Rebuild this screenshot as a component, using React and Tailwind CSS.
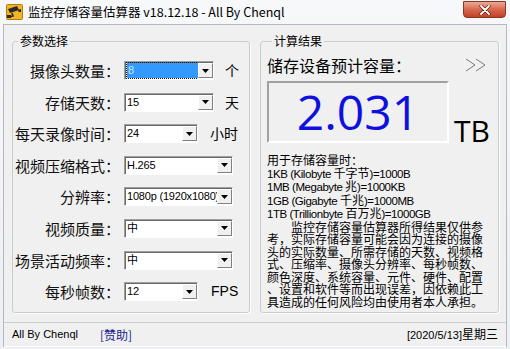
import React from "react";

const rows = [
  { label: "摄像头数量：", value: "8", w: "w-[90px]", unit: "个", selected: true },
  { label: "存储天数：", value: "15", w: "w-[90px]", unit: "天" },
  { label: "每天录像时间：", value: "24", w: "w-[74px]", unit: "小时" },
  { label: "视频压缩格式：", value: "H.265", w: "w-[109px]" },
  { label: "分辨率：", value: "1080p (1920x1080)", w: "w-[109px]" },
  { label: "视频质量：", value: "中", w: "w-[109px]" },
  { label: "场景活动频率：", value: "中", w: "w-[109px]" },
  { label: "每秒帧数：", value: "12", w: "w-[74px]", unit: "FPS" },
];

const notes = [
  "用于存储容量时：",
  "1KB (Kilobyte 千字节)=1000B",
  "1MB (Megabyte 兆)=1000KB",
  "1GB (Gigabyte 千兆)=1000MB",
  "1TB (Trillionbyte 百万兆)=1000GB",
  "　　监控存储容量估算器所得结果仅供参",
  "考，实际存储容量可能会因为连接的摄像",
  "头的实际数量、所需存储的天数、视频格",
  "式、压缩率、摄像头分辨率、每秒帧数、",
  "颜色深度、系统容量、元件、硬件、配置",
  "、设置和软件等而出现误差，因依赖此工",
  "具造成的任何风险均由使用者本人承担。",
];

// split a line into latin / cjk runs so the latin part can use a narrower face
function Mixed({ text }) {
  const parts = text.split(/([\x20-\x7E]+)/).filter(Boolean);
  return parts.map((p, i) =>
    /^[\x20-\x7E]+$/.test(p) ? (
      <span key={i} className="font-['Liberation_Sans',sans-serif] text-[11.5px] tracking-[-0.45px]">
        {p}
      </span>
    ) : (
      <span key={i}>{p}</span>
    )
  );
}

function AppIcon() {
  return (
    <svg width="17" height="16" viewBox="0 0 17 16">
      <rect x="0.5" y="0.5" width="16" height="15" rx="1" fill="#f2b526" stroke="#b67a10" />
      <path d="M2 5 L11 2 L13 6 L4 9 Z" fill="#2a2a2a" />
      <path d="M12 6 L15 5 L15 8 L12.5 8 Z" fill="#2a2a2a" />
      <path d="M6 9 L7 12 L3 13 L3 11" fill="none" stroke="#2a2a2a" strokeWidth="1.6" />
      <rect x="1" y="11" width="4" height="3" fill="#2a2a2a" />
    </svg>
  );
}

function Combo({ value, w, selected }) {
  return (
    <div className={`${w} h-[19px] flex bg-white border border-[#a0a0a0] border-b-white border-r-white shadow-[inset_1px_1px_0_#696969]`}>
      <div className="flex-1 min-w-0 pl-[2px] pt-[1px] overflow-hidden">
        {selected ? (
          <div className="h-[15px] bg-[#3399ff] outline outline-1 outline-dotted outline-[#1a1a1a] text-[#cfe6ff] pl-[1px] leading-[15px]">
            {value}
          </div>
        ) : (
          <div className="whitespace-nowrap leading-[15px] text-black tracking-[-0.2px]">{value}</div>
        )}
      </div>
      <div className="w-[15px] my-[1px] bg-[#f0f0f0] border border-white border-r-[#808080] border-b-[#808080] flex items-center justify-center">
        <svg width="7" height="4" viewBox="0 0 7 4">
          <path d="M0 0 H7 L3.5 4 Z" fill="#000" />
        </svg>
      </div>
    </div>
  );
}

export default function App() {
  return (
    <div className="w-[510px] h-[349px] bg-gradient-to-b from-[#f7f8fa] to-[#eceff3] font-['Noto_Sans_CJK_SC',sans-serif] text-black flex flex-col overflow-hidden">
      <div className="h-[24px] flex items-center pl-[6px] pr-[4px]">
        <AppIcon />
        <span className="ml-[5px] text-[12.5px] leading-none">
          监控存储容量估算器 v18.12.18 - All By Chenql
        </span>
        <div className="ml-auto self-start mt-[1px] w-[43px] h-[17px] rounded-b-[4px] border border-[#8b3522] bg-gradient-to-b from-[#e9a896] via-[#d6684e] to-[#c24124] flex items-center justify-center">
          <svg width="12" height="10" viewBox="0 0 12 10">
            <path d="M2 1 L10 9 M10 1 L2 9" stroke="#5a1d10" strokeWidth="3.2" strokeLinecap="round" />
            <path d="M2 1 L10 9 M10 1 L2 9" stroke="#fff" strokeWidth="1.8" strokeLinecap="round" />
          </svg>
        </div>
      </div>

      <div className="flex-1 mx-[3px] mb-[2px] border border-[#b5b9bf] bg-[#f0f0f0] flex flex-col">
        <div className="flex gap-[10px] pl-[8px] pt-[9px]">
          <fieldset className="w-[238px] h-[279px] border border-[#c9ccd0] rounded-[3px] shadow-[1px_1px_0_#fff]">
            <legend className="ml-[5px] px-[2px] text-[12px] leading-[14px]">参数选择</legend>
            <div className="flex flex-col gap-[12.6px] pt-[13px]">
              {rows.map((r) => (
                <div key={r.label} className="flex items-center h-[19px]">
                  <div className="w-[107px] text-right text-[15px] leading-none whitespace-nowrap text-[#111]">
                    {r.label}
                  </div>
                  <div className="ml-[4px] text-[11px] font-['Liberation_Sans','Noto_Sans_CJK_SC',sans-serif]">
                    <Combo value={r.value} w={r.w} selected={r.selected} />
                  </div>
                  {r.unit && (
                    <span
                      className={
                        r.unit === "FPS"
                          ? "ml-[13px] text-[14px] font-['Liberation_Sans',sans-serif]"
                          : r.unit === "小时"
                          ? "ml-[12px] text-[14px]"
                          : "ml-[11px] text-[14px]"
                      }
                    >
                      {r.unit}
                    </span>
                  )}
                </div>
              ))}
            </div>
          </fieldset>

          <fieldset className="w-[239px] h-[279px] border border-[#c9ccd0] rounded-[3px] shadow-[1px_1px_0_#fff] pl-[6px]">
            <legend className="ml-[5px] px-[2px] text-[12px] leading-[14px]">计算结果</legend>
            <div className="pt-[7px] flex items-center justify-between pr-[11px]">
              <span className="text-[16px] leading-[20px]">储存设备预计容量：</span>
              <svg width="22" height="14" viewBox="0 0 22 14">
                <path d="M1 1 L10 7 L1 13 M11 1 L20 7 L11 13" fill="none" stroke="#7a7a7a" strokeWidth="1" />
              </svg>
            </div>
            <div className="mt-[6px] flex items-end">
              <div className="w-[182px] h-[62px] border-2 border-[#a0a0a0] border-b-white border-r-white flex items-center justify-center">
                <span className="text-[48px] leading-none text-[#0f0fe0] font-['Open_Sans',sans-serif]">
                  2.031
                </span>
              </div>
              <span className="ml-[5px] text-[30px] leading-none font-['Open_Sans',sans-serif] mb-[-3px]">
                TB
              </span>
            </div>
            <div className="mt-[11px] text-[12px] leading-[12.5px] whitespace-pre">
              {notes.map((n) => (
                <div key={n}>
                  <Mixed text={n} />
                </div>
              ))}
            </div>
          </fieldset>
        </div>

        <div className="mt-[9px] border-t border-[#c9ccd0] shadow-[0_1px_0_#fff] flex-1 flex items-center px-[8px] text-[12px]">
          <span className="font-['Liberation_Sans',sans-serif] text-[11px]">All By Chenql</span>
          <span className="ml-[22px] text-[#1a1a8c]">[赞助]</span>
          <span className="ml-auto">
            <span className="font-['Liberation_Sans',sans-serif] text-[11px]">[2020/5/13]</span>星期三
          </span>
        </div>
      </div>
    </div>
  );
}
